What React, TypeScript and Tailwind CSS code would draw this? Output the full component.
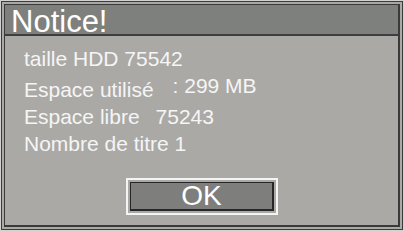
export default function App() {
  return (
    <div className="w-[404px] h-[231px] bg-[#aba9a6] border border-[#d2d2d2] font-['Liberation_Sans',Arial,sans-serif]">
      <div className="h-full border border-[#3c3c3c] p-[2px]">
        <div className="h-full flex flex-col border border-[#3a3a3a] border-r-2 border-b-2">
          {/* Title bar */}
          <div className="h-[31px] bg-[#7e807d] border-b-2 border-[#3e3e3e] pl-[6px] pt-[3px]">
            <span className="text-[31px] leading-[27px] text-white">Notice!</span>
          </div>

          {/* Body */}
          <div className="flex-1 flex flex-col pl-[19px] pt-[9px] text-[21px] leading-[27px] text-[#f5f5f5]">
            <div>taille HDD 75542</div>
            <div>
              Espace utilisé<span className="ml-[19px] align-[4px]">: 299 MB</span>
            </div>
            <div>
              Espace libre<span className="ml-[16px]">75243</span>
            </div>
            <div>Nombre de titre 1</div>

            <div className="mt-[21px] ml-[102px] w-[152px] border-2 border-[#f4f4f4] p-[2px]">
              <div className="h-[29px] bg-[#7e7f7d] border border-[#262626] border-r-2 border-b-2 flex items-center justify-center text-[28px] leading-[26px] text-white">
                OK
              </div>
            </div>
          </div>
        </div>
      </div>
    </div>
  );
}
